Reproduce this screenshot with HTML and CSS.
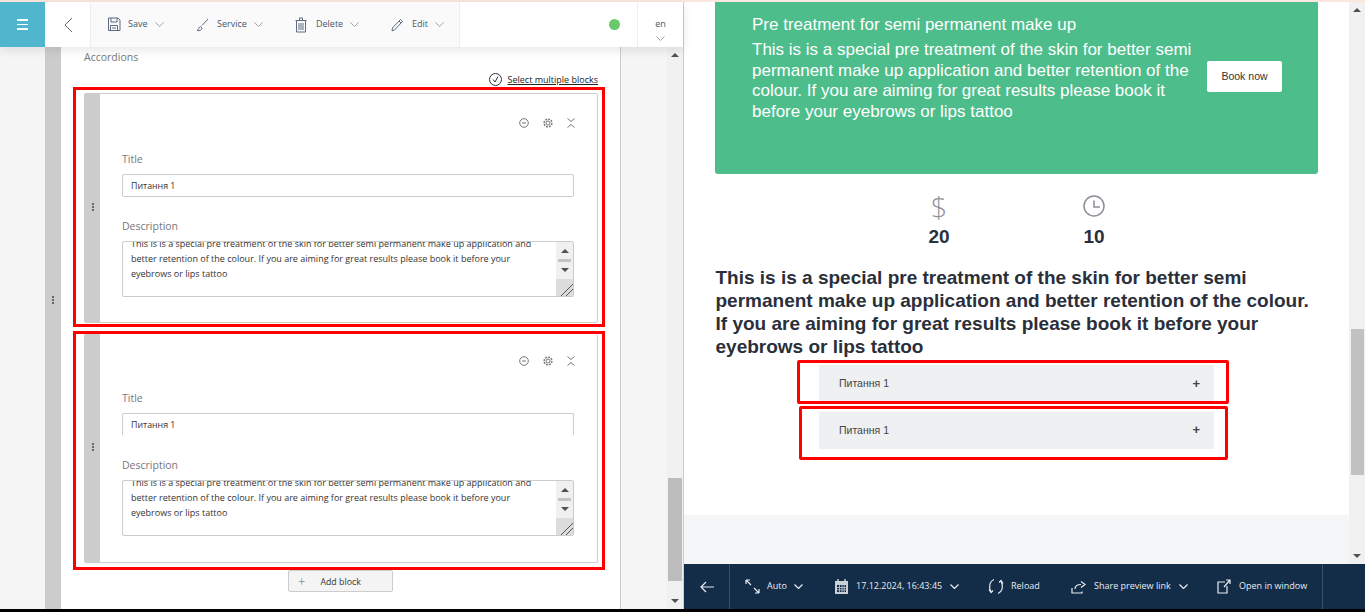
FILE: index.html
```html
<!DOCTYPE html>
<html lang="en">
<head>
  <meta charset="utf-8">
  <title>Service editor</title>
  <link rel="stylesheet" href="styles.css">
</head>
<body>
  <div class="top-line"></div>
  <div class="panes">

    <div class="left">
      <div class="topbar">
        <div class="burger"><span></span><span></span><span></span></div>
        <div class="back">
          <svg width="10" height="16" viewBox="0 0 10 16"><path d="M9 1 2 8l7 7" class="ln"/></svg>
        </div>
        <div class="tools">
          <div class="tool t-save">
            <svg width="14" height="15" viewBox="0 0 14 15"><path d="M1.500 1h9.500l2 2v10.500h-11.500zM4 1v4h6V1M3.500 13.500V8.500h7v5M5 11h4" class="ln"/></svg>
            <span>Save</span>
            <svg class="chev" width="9" height="5" viewBox="0 0 9 5"><path d="M.5.500l4 4 4-4" class="ln"/></svg>
          </div>
          <div class="tool t-service">
            <svg width="13" height="14" viewBox="0 0 13 14"><path d="M12 1 6 7.500M4.500 8.500c-2 .5-1 2.500-3.500 4 2.500.5 5-.5 5-2.500z" class="ln"/></svg>
            <span>Service</span>
            <svg class="chev" width="9" height="5" viewBox="0 0 9 5"><path d="M.5.500l4 4 4-4" class="ln"/></svg>
          </div>
          <div class="tool t-delete">
            <svg width="12" height="16" viewBox="0 0 12 16"><path d="M.5 3.500h11M4.500 3V1h3v2M1.500 3.500v11.500h9V3.500M4 6v7M6 6v7M8 6v7" class="ln"/></svg>
            <span>Delete</span>
            <svg class="chev" width="9" height="5" viewBox="0 0 9 5"><path d="M.5.500l4 4 4-4" class="ln"/></svg>
          </div>
          <div class="tool t-edit">
            <svg width="13" height="14" viewBox="0 0 13 14"><path d="M9.500 1.500l2 2-8 8.500-2.500.8.500-2.800zM8 3l2 2" class="ln"/></svg>
            <span>Edit</span>
            <svg class="chev" width="9" height="5" viewBox="0 0 9 5"><path d="M.5.500l4 4 4-4" class="ln"/></svg>
          </div>
        </div>
        <div class="status"><i class="dot"></i></div>
        <div class="lang">
          <span>en</span>
          <svg class="chev" width="9" height="5" viewBox="0 0 9 5"><path d="M.5.500l4 4 4-4" class="ln"/></svg>
        </div>
      </div>

      <div class="editor">
        <div class="gutter"></div>
        <div class="strip"><span class="dots"></span></div>
        <div class="form">
          <div class="form-title">Accordions</div>
          <div class="select-row">
            <svg width="13" height="13" viewBox="0 0 13 13"><circle cx="6.500" cy="6.500" r="6" class="ln dark"/><path d="M4 6.500 6 9l3-5.500" class="ln dark"/></svg>
            <a>Select multiple blocks</a>
          </div>

          <div class="frame">
            <div class="card">
              <div class="handle"><span class="dots"></span></div>
              <div class="card-body">
                <div class="card-icons">
                  <svg width="10" height="10" viewBox="0 0 10 10"><circle cx="5" cy="5" r="4.300" class="ln grey"/><path d="M3 5h4" class="ln grey"/></svg>
                  <svg width="10" height="10" viewBox="0 0 10 10"><circle cx="5" cy="5" r="2" class="ln grey"/><circle cx="5" cy="5" r="3.900" class="ln grey dash"/></svg>
                  <svg width="8" height="10" viewBox="0 0 8 10"><path d="M.5.500 4 3.500 7.500.500M.5 9.500 4 6.500l3.500 3" class="ln grey"/></svg>
                </div>
                <label>Title</label>
                <div class="field">Питання 1</div>
                <label class="lbl-desc">Description</label>
                <div class="area">
                  <p>This is is a special pre treatment of the skin for better semi permanent make up application and better retention of the colour. If you are aiming for great results please book it before your eyebrows or lips tattoo</p>
                  <div class="area-bar"><b class="up"></b><em></em><b class="down"></b><u></u></div>
                </div>
              </div>
            </div>
          </div>

          <div class="frame second">
            <div class="card">
              <div class="handle"><span class="dots"></span></div>
              <div class="card-body">
                <div class="card-icons">
                  <svg width="10" height="10" viewBox="0 0 10 10"><circle cx="5" cy="5" r="4.300" class="ln grey"/><path d="M3 5h4" class="ln grey"/></svg>
                  <svg width="10" height="10" viewBox="0 0 10 10"><circle cx="5" cy="5" r="2" class="ln grey"/><circle cx="5" cy="5" r="3.900" class="ln grey dash"/></svg>
                  <svg width="8" height="10" viewBox="0 0 8 10"><path d="M.5.500 4 3.500 7.500.500M.5 9.500 4 6.500l3.500 3" class="ln grey"/></svg>
                </div>
                <label>Title</label>
                <div class="field">Питання 1</div>
                <label class="lbl-desc">Description</label>
                <div class="area">
                  <p>This is is a special pre treatment of the skin for better semi permanent make up application and better retention of the colour. If you are aiming for great results please book it before your eyebrows or lips tattoo</p>
                  <div class="area-bar"><b class="up"></b><em></em><b class="down"></b><u></u></div>
                </div>
              </div>
            </div>
          </div>

          <button class="add-block"><span class="plus">+</span>Add block</button>
        </div>
        <div class="margin"></div>
        <div class="scroll">
          <b class="up"></b>
          <div class="track-left"><i></i></div>
          <b class="down"></b>
        </div>
      </div>
    </div>

    <div class="right">
      <div class="preview-wrap">
        <div class="preview">
          <div class="page">
            <div class="hero">
              <div class="hero-text">
                <h3>Pre treatment for semi permanent make up</h3>
                <p>This is is a special pre treatment of the skin for better semi permanent make up application and better retention of the colour. If you are aiming for great results please book it before your eyebrows or lips tattoo</p>
              </div>
              <a class="book">Book now</a>
            </div>
            <div class="stats">
              <div class="stat">
                <span class="dollar">$</span>
                <strong>20</strong>
              </div>
              <div class="stat">
                <svg width="22" height="22" viewBox="0 0 22 22"><circle cx="11" cy="11" r="10" class="ln clock"/><path d="M11 5.500V12h6" class="ln clock"/></svg>
                <strong>10</strong>
              </div>
            </div>
            <h2>This is is a special pre treatment of the skin for better semi permanent make up application and better retention of the colour. If you are aiming for great results please book it before your eyebrows or lips tattoo</h2>
            <div class="acc-frame one">
              <div class="acc"><span>Питання 1</span><i>+</i></div>
            </div>
            <div class="acc-frame two">
              <div class="acc"><span>Питання 1</span><i>+</i></div>
            </div>
          </div>
          <div class="page-foot"></div>
        </div>
        <div class="scroll right-scroll">
          <b class="up"></b>
          <div class="track-right"><i></i></div>
          <b class="down"></b>
        </div>
      </div>

      <div class="bottombar">
        <div class="bb-back">
          <svg width="14" height="12" viewBox="0 0 14 12"><path d="M14 6H1M6 1 1 6l5 5" class="ln white"/></svg>
        </div>
        <div class="bb-items">
          <div class="bb-item b-auto">
            <svg width="15" height="15" viewBox="0 0 15 15"><path d="M1 1l5 5M1 1v4M1 1h4M9 9l5 5M14 14v-4M14 14h-4" class="ln white"/></svg>
            <span>Auto</span>
            <svg class="chev" width="9" height="5" viewBox="0 0 9 5"><path d="M.5.500l4 4 4-4" class="ln white"/></svg>
          </div>
          <div class="bb-item b-date">
            <svg width="13" height="15" viewBox="0 0 13 15"><path d="M0 2h13v13H0z" fill="#c9d0d8"/><path d="M3 0v3M10 0v3" class="ln white"/><path d="M2 6h9v7H2z" fill="#132c48"/><path d="M2 8.500h9M2 10.800h9M4.500 6v7M7 6v7M9.200 6v7" stroke="#c9d0d8" stroke-width=".8"/></svg>
            <span>17.12.2024, 16:43:45</span>
            <svg class="chev" width="9" height="5" viewBox="0 0 9 5"><path d="M.5.500l4 4 4-4" class="ln white"/></svg>
          </div>
          <div class="bb-item b-reload">
            <svg width="16" height="17" viewBox="0 0 16 17"><path d="M6 1.500C2 3 0 8 3 14M1 11.500l2 3 2-2M10 15.500c4-1.500 6-6.500 3-12.500M15 5.500l-2-3-2 2" class="ln white"/></svg>
            <span>Reload</span>
          </div>
          <div class="bb-item b-share">
            <svg width="15" height="14" viewBox="0 0 15 14"><path d="M1 8v5h10v-1.500M4 9c0-3 2-4.500 6-4.500M10 1.500l4 3-4 3" class="ln white"/></svg>
            <span>Share preview link</span>
            <svg class="chev" width="9" height="5" viewBox="0 0 9 5"><path d="M.5.500l4 4 4-4" class="ln white"/></svg>
          </div>
          <div class="bb-item b-open">
            <svg width="14" height="15" viewBox="0 0 14 15"><path d="M8 3H1v11h9V7M7 8l6-7M9 1h4v4" class="ln white"/></svg>
            <span>Open in window</span>
          </div>
        </div>
      </div>
    </div>

  </div>
  <div class="bottom-line"></div>
</body>
</html>
```

FILE: styles.css
```css
html, body {
  margin: 0;
  height: 612px;
  overflow: hidden;
  background: #fff;
  font-family: "Open Sans", sans-serif;
}
p, h2, h3 { margin: 0; }
.ln {
  fill: none;
  stroke: #5d6b80;
  stroke-width: 1;
}
.chev .ln { stroke: #9aa5b4; }
.ln.dark { stroke: #333; }
.ln.grey { stroke: #777; }
.ln.dash { stroke-dasharray: 2 1; stroke-width: 1.400; }
.ln.white, .chev .ln.white { stroke: #e8ecf0; stroke-width: 1.200; }
.ln.clock { stroke: #8a8f96; stroke-width: 1.500; }

.top-line {
  height: 2px;
  background: #fbe7dd;
}
.bottom-line {
  height: 3px;
  background: #000;
}
.panes {
  display: flex;
  height: 607px;
}

/* left side */
.left {
  width: 684px;
  display: flex;
  flex-direction: column;
  box-sizing: border-box;
  border-right: 1px solid #ccc;
}
.topbar {
  display: flex;
  height: 45px;
  flex: none;
  position: relative;
  z-index: 2;
  background: #fff;
  box-shadow: 0 3px 10px rgba(0, 0, 0, .1);
  color: #46566c;
  font-size: 9px;
}
.burger {
  width: 45px;
  background: #4fb6cd;
  display: flex;
  flex-direction: column;
  align-items: center;
  justify-content: center;
  gap: 3px;
}
.burger span {
  width: 11px;
  height: 1.500px;
  background: #fff;
}
.back {
  width: 45px;
  display: flex;
  align-items: center;
  justify-content: center;
}
.tools {
  width: 352px;
  display: flex;
  align-items: center;
  background: #fafafa;
  border-left: 1px solid #eee;
  border-right: 1px solid #eee;
  padding-left: 16px;
}
.tool {
  display: flex;
  align-items: center;
}
.tool span {
  margin: -2px 0 0 7px;
}
.tool .chev { margin-left: 7px; }
.t-save { width: 89px; }
.t-service { width: 99px; }
.t-service span { margin-left: 8px; }
.t-delete { width: 96px; }
.t-delete span { margin-left: 9px; }
.t-edit span { margin-left: 8px; }
.status {
  flex: 1;
  display: flex;
  align-items: center;
  justify-content: flex-end;
  padding-right: 17px;
}
.dot {
  width: 11px;
  height: 11px;
  border-radius: 50%;
  background: #68c96b;
}
.lang {
  width: 46px;
  border-left: 1px solid #eee;
  display: flex;
  flex-direction: column;
  align-items: center;
  justify-content: center;
  gap: 6px;
  padding-top: 8px;
  box-sizing: border-box;
}

.editor {
  flex: 1;
  display: flex;
  min-height: 0;
}
.gutter {
  width: 45px;
  background: #f5f5f5;
}
.strip {
  width: 16px;
  background: #ccc;
  display: flex;
  align-items: center;
  justify-content: center;
  padding-bottom: 56px;
  box-sizing: border-box;
}
.dots {
  width: 2px;
  height: 2px;
  background: #444;
  border-radius: 50%;
  box-shadow: 0 -3px 0 #444, 0 3px 0 #444;
}
.form {
  width: 559px;
  background: #fff;
  padding-left: 12px;
  box-sizing: border-box;
  color: #666;
  overflow: hidden;
}
.form-title {
  font-size: 10.500px;
  line-height: 14px;
  padding: 3px 0 0 11px;
  color: #777;
}
.select-row {
  display: flex;
  align-items: center;
  justify-content: flex-end;
  gap: 6px;
  width: 525px;
  height: 16px;
  margin-top: 7px;
  font-size: 9px;
  color: #222;
}
.select-row a { text-decoration: underline; }

.frame {
  width: 532px;
  height: 240px;
  box-sizing: border-box;
  border: 3px solid #f00;
  padding: 3px 4px 0 8px;
}
.frame.second {
  margin-top: 4px;
  height: 239px;
  padding-top: 0;
}
.card {
  display: flex;
  height: 230px;
  box-sizing: border-box;
  border: 1px solid #ccc;
  border-radius: 2px;
}
.frame.second .card {
  height: 229px;
  border-top: 0;
}
.handle {
  width: 15px;
  background: #ccc;
  display: flex;
  align-items: center;
  justify-content: center;
  padding-bottom: 2px;
  box-sizing: border-box;
}
.frame.second .handle { padding-bottom: 3px; }
.card-body {
  flex: 1;
  padding: 0 23px 0 22px;
}
.card-icons {
  display: flex;
  align-items: center;
  justify-content: flex-end;
  gap: 14px;
  height: 10px;
  margin: 24px -1px 0 0;
}
.frame.second .card-icons { margin-top: 22px; }
label {
  display: block;
  font-size: 10.500px;
  line-height: 14px;
  margin-top: 24px;
  color: #777;
}
.frame.second label { margin-top: 25px; }
.card-body label.lbl-desc { margin-top: 22px; }
.field {
  height: 23px;
  box-sizing: border-box;
  margin-top: 8px;
  border: 1px solid #ccc;
  border-radius: 2px;
  padding: 1px 8px 0;
  font-size: 8.800px;
  line-height: 21px;
  color: #333;
}
.frame.second .field {
  border-bottom-color: #fff;
}
.area {
  position: relative;
  height: 56px;
  box-sizing: border-box;
  margin-top: 8px;
  border: 1px solid #ccc;
  border-radius: 2px;
  overflow: hidden;
  padding-right: 17px;
}
.area p {
  margin: -6px 8px 0 8px;
  font-size: 9px;
  line-height: 15px;
  color: #333;
}
.area-bar {
  position: absolute;
  top: 0;
  right: 0;
  bottom: 0;
  width: 17px;
  background: #f0f0f0;
  display: flex;
  flex-direction: column;
  align-items: center;
}
.area-bar .up { margin-top: 7px; }
.area-bar em {
  width: 13px;
  height: 3px;
  background: #c4c4c4;
  margin: 6px 0;
}
.area-bar u {
  margin-top: auto;
  width: 17px;
  height: 17px;
  background: linear-gradient(135deg, #dcdcdc 0 62%, #555 62% 66%, #dcdcdc 66% 78%, #555 78% 82%, #dcdcdc 82%);
}
.up, .down {
  display: block;
  width: 0;
  height: 0;
  border-left: 4px solid transparent;
  border-right: 4px solid transparent;
  flex: none;
}
.up { border-bottom: 4px solid #505050; }
.down { border-top: 4px solid #505050; }

.add-block {
  display: block;
  width: 105px;
  height: 22px;
  margin: 0 0 0 215px;
  padding: 0 0 0 9px;
  border: 1px solid #ccc;
  border-radius: 2px;
  background: #f4f4f4;
  font: 8.800px "Open Sans", sans-serif;
  color: #333;
  text-align: left;
}
.add-block .plus {
  font-size: 13px;
  font-weight: 300;
  color: #666;
  margin-right: 15px;
  vertical-align: -1px;
}
.margin {
  width: 47px;
  background: #f5f5f5;
  border-left: 1px solid #ccc;
  box-sizing: border-box;
}
.scroll {
  width: 16px;
  background: #f1f1f1;
  display: flex;
  flex-direction: column;
  align-items: center;
  padding: 6px 0;
  box-sizing: border-box;
  flex: none;
}
.track-left, .track-right {
  flex: 1;
  width: 14px;
  position: relative;
  margin: 3px 0;
}
.track-left i {
  position: absolute;
  top: 418px;
  left: 0;
  right: 0;
  height: 103px;
  background: #bdbdbd;
}
.track-right i {
  position: absolute;
  top: 314px;
  left: 1px;
  right: 0;
  height: 146px;
  background: #c1c1c1;
}

/* preview side */
.right {
  flex: 1;
  display: flex;
  flex-direction: column;
  min-width: 0;
}
.preview-wrap {
  flex: 1;
  display: flex;
  min-height: 0;
}
.preview {
  flex: 1;
  display: flex;
  flex-direction: column;
  background: #f5f6f8;
  color: #2a2f3a;
  font-family: "Liberation Sans", sans-serif;
}
.page {
  height: 513px;
  background: #fff;
  padding-left: 31px;
  overflow: hidden;
}
.hero {
  width: 603px;
  height: 172px;
  box-sizing: border-box;
  background: #4dbd8b;
  border-radius: 0 0 3px 3px;
  color: #fff;
  display: flex;
  padding: 13px 36px 0 37px;
}
.hero-text { width: 455px; }
.hero h3 {
  font-size: 17px;
  font-weight: 400;
  line-height: 20px;
}
.hero p {
  font-size: 17px;
  line-height: 20.500px;
  margin-top: 5px;
}
.book {
  width: 75px;
  height: 31px;
  margin: 46px 0 0 auto;
  background: #fff;
  border-radius: 2px;
  color: #333;
  font-size: 10.500px;
  line-height: 31px;
  text-align: center;
}
.stats {
  display: flex;
  height: 92px;
  padding: 21px 0 0 184px;
  box-sizing: border-box;
}
.stat {
  width: 80px;
  margin-right: 75px;
  display: flex;
  flex-direction: column;
  align-items: center;
}
.dollar {
  font-family: "Open Sans", sans-serif;
  font-size: 29px;
  line-height: 24px;
  height: 22px;
  color: #8f949b;
  font-weight: 300;
}
.stat strong {
  font-size: 19px;
  line-height: 23px;
  margin-top: 8px;
}
.page h2 {
  width: 610px;
  margin-left: .5px;
  font-size: 19px;
  line-height: 23px;
  font-weight: 700;
}
.acc-frame {
  box-sizing: border-box;
  border: 3px solid #f00;
  border-radius: 2px;
}
.acc-frame.one {
  width: 432px;
  height: 44px;
  margin: 2px 0 0 82px;
  padding: 2px 0 0 19px;
}
.acc-frame.two {
  width: 429px;
  height: 54px;
  margin: 2px 0 0 84px;
  padding: 3px 0 0 17px;
}
.acc {
  width: 395px;
  height: 37px;
  background: #eff0f2;
  display: flex;
  align-items: center;
  justify-content: space-between;
  padding: 0 14px 0 20px;
  box-sizing: border-box;
  font-size: 10.500px;
  color: #444;
}
.acc-frame.one .acc { height: 36px; }
.acc-frame.two .acc { padding-bottom: 2px; }
.acc i {
  font-style: normal;
  font-size: 13px;
  font-weight: 700;
  color: #444;
}
.page-foot { flex: 1; }

.bottombar {
  height: 45px;
  flex: none;
  background: #132c48;
  color: #e8ecf0;
  display: flex;
  font-size: 9px;
}
.bb-back {
  width: 45px;
  display: flex;
  align-items: center;
  justify-content: center;
  border-right: 1px solid #3a5068;
}
.bb-items {
  width: 592px;
  display: flex;
  align-items: center;
  border-right: 1px solid #3a5068;
}
.bb-item {
  display: flex;
  align-items: center;
  gap: 8px;
}
.bb-item span { margin-top: -2px; }
.b-auto { margin-left: 15px; width: 90px; gap: 7px; }
.b-date { width: 153px; }
.b-reload { width: 83px; gap: 7px; }
.b-share { width: 146px; }
.chev { flex: none; }
```
